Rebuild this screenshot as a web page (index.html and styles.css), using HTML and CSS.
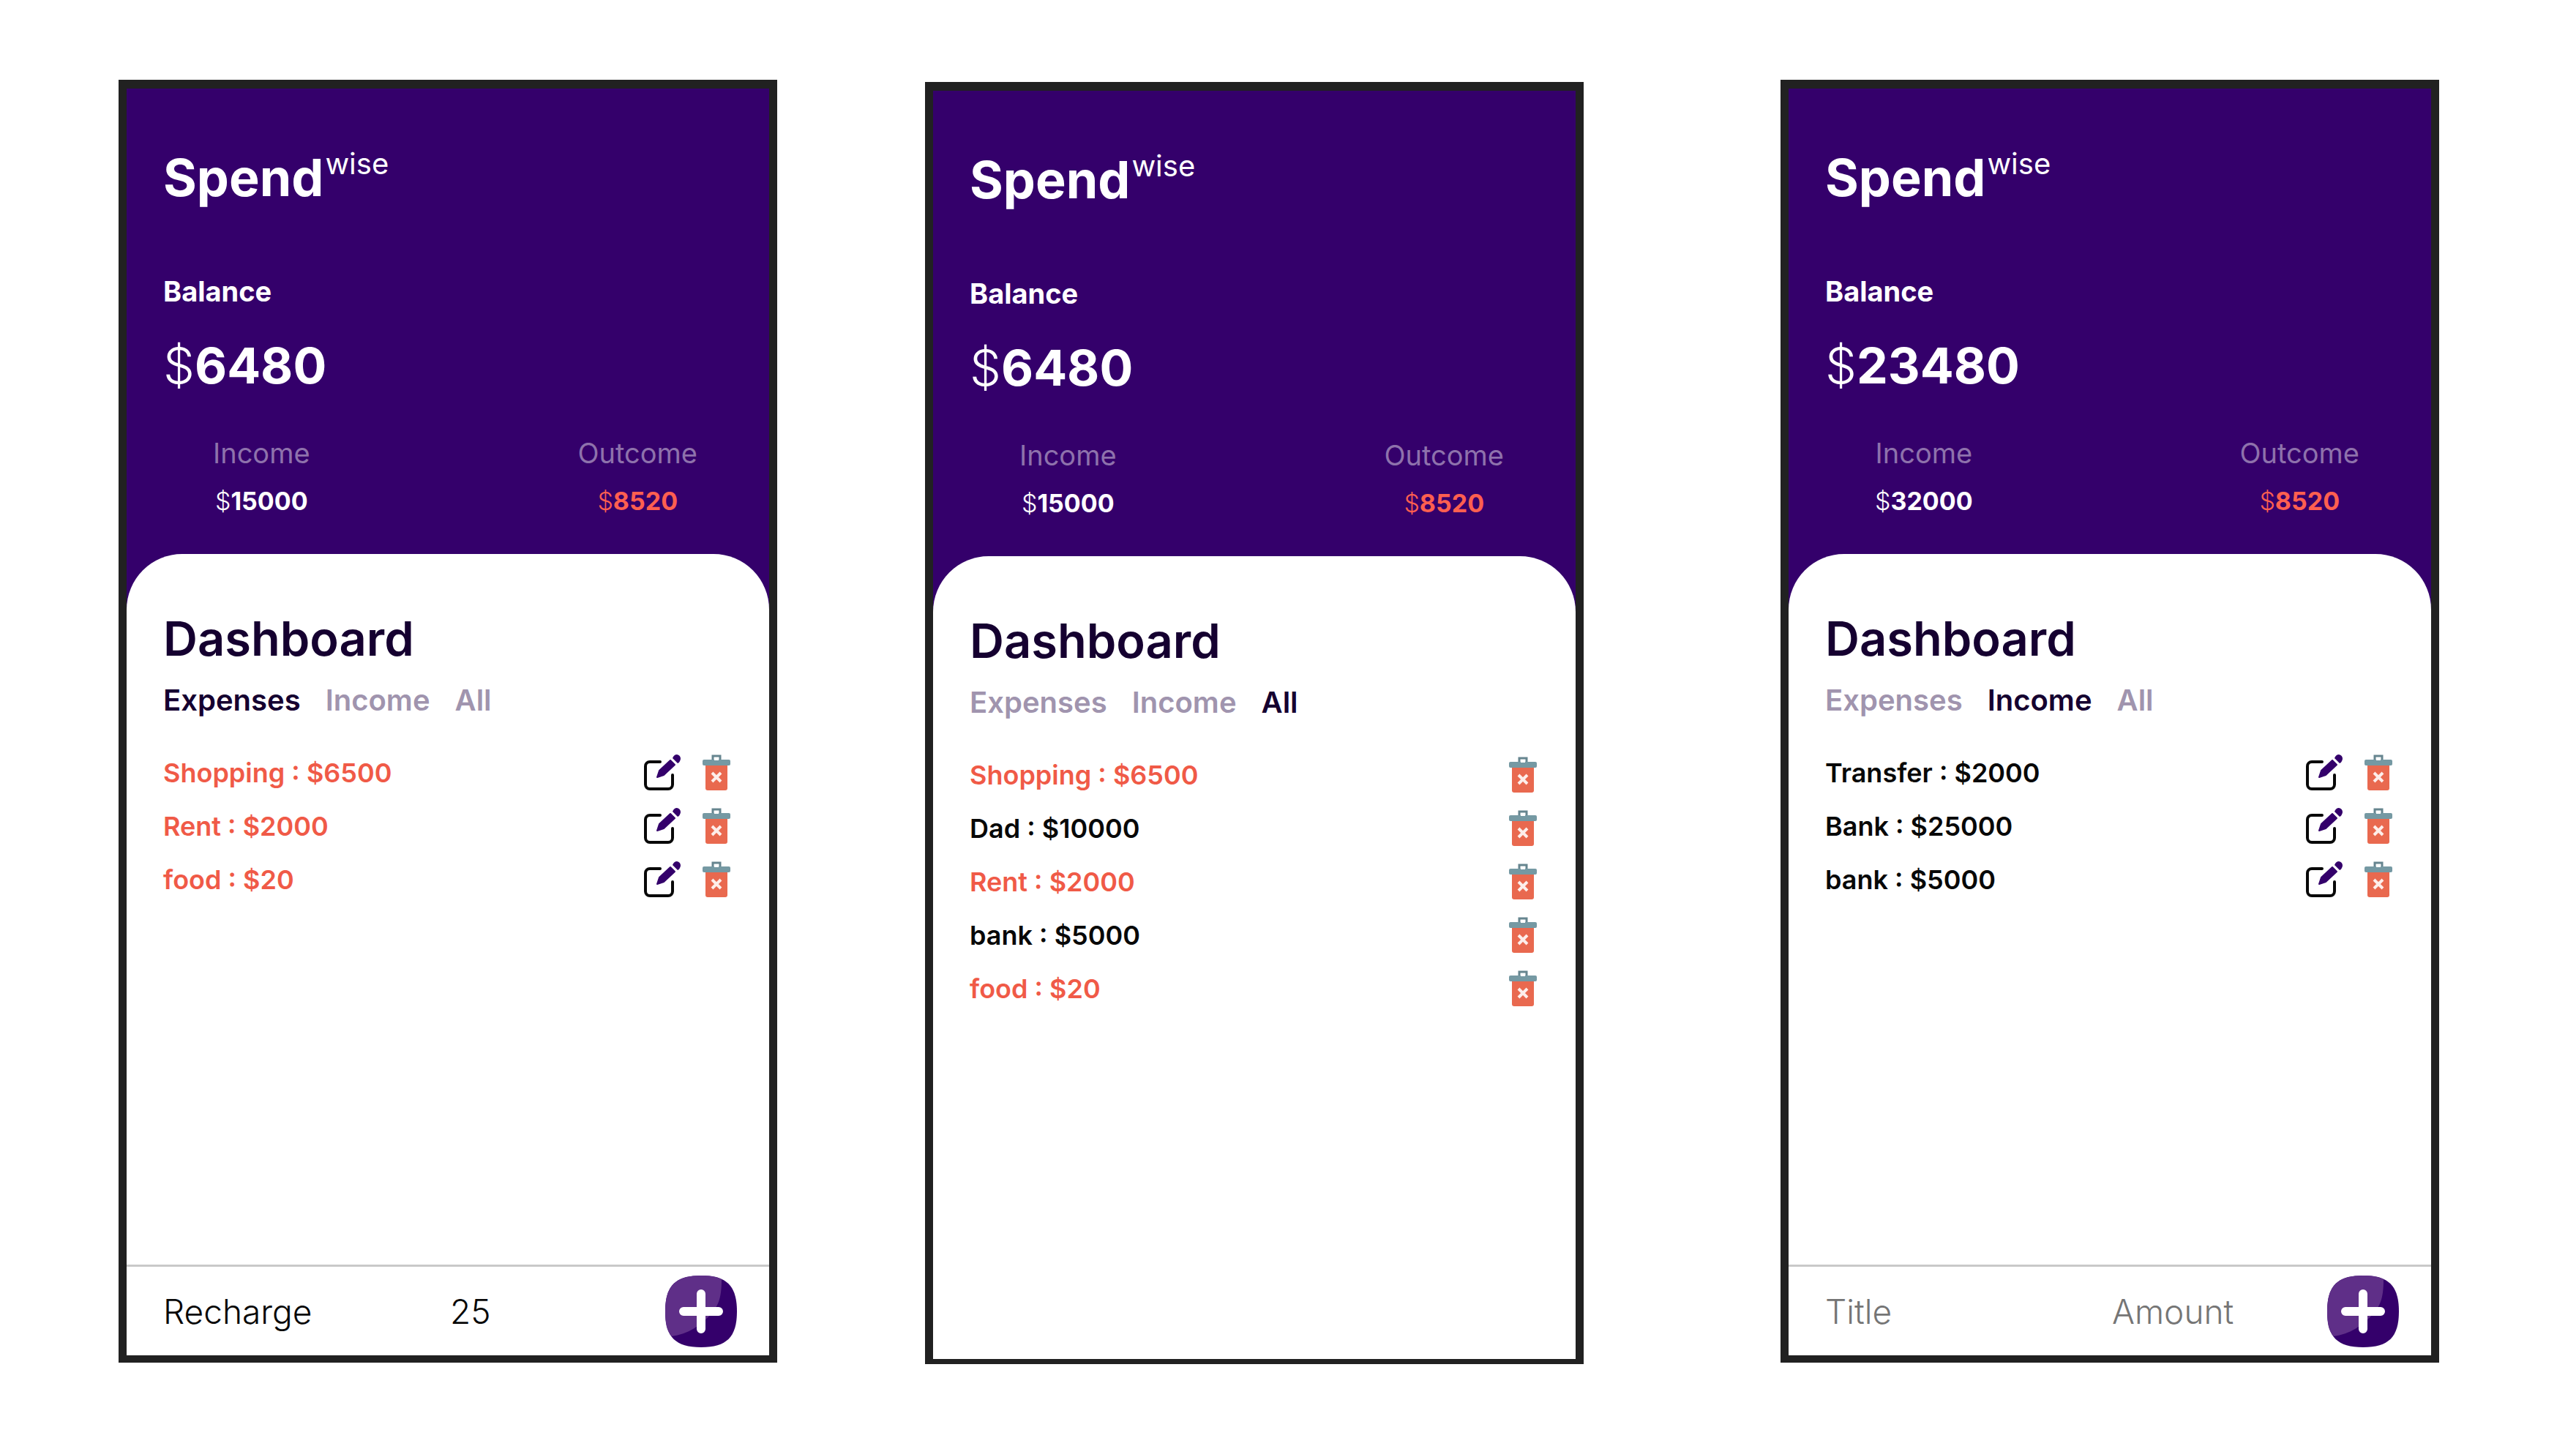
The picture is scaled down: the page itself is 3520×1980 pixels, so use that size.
FILE: index.html
```html
<!DOCTYPE html>
<html lang="en">
<head>
<meta charset="utf-8">
<meta name="viewport" content="width=device-width, initial-scale=1">
<title>Spendwise</title>
<link rel="stylesheet" href="styles.css">
</head>
<body>
<svg class="sprite" aria-hidden="true">
  <symbol id="edit" viewBox="0 0 50 50">
    <path d="M22 10H8a6 6 0 0 0-6 6v25a6 6 0 0 0 6 6h25a6 6 0 0 0 6-6V28" fill="none" stroke="#080808" stroke-width="4" stroke-linecap="round"/>
    <path d="M18 31l3-9L36 8l6 6-15 14z" fill="#34006b" stroke="#34006b" stroke-width="2" stroke-linejoin="round"/>
    <path d="M39 5q2-5 6-5 5 1 5 6-1 5-4 6z" fill="#34006b"/>
  </symbol>
  <symbol id="trash" viewBox="0 0 38 50">
    <path d="M4 13h30v33a3 3 0 0 1-3 3H7a3 3 0 0 1-3-3z" fill="#e9694f"/>
    <path d="M14 9V2h10v7" fill="none" stroke="#66858f" stroke-width="3"/>
    <rect x="0" y="7" width="38" height="8" rx="2" fill="#7599a3"/>
    <rect x="16" y="4" width="6" height="4" fill="#fff"/>
    <path d="M13 25l12 12M25 25L13 37" stroke="#fdeeea" stroke-width="4"/>
  </symbol>
  <symbol id="plus" viewBox="0 0 98 98">
    <path d="M49 0C84 0 98 14 98 49S84 98 49 98 0 84 0 49 14 0 49 0z" fill="#34006b"/>
    <path d="M49 0C61 0 70 1 77 5 77 24 75 37 66 48 50 69 30 80 9 83 2 76 0 65 0 49 0 14 14 0 49 0z" fill="#5f2f88"/>
    <path d="M25 49h48M49 25v48" stroke="#fff" stroke-width="12" stroke-linecap="round"/>
  </symbol>
</svg>

<main class="board">
  <section class="phone">
    <header class="summary">
      <h1 class="logo">Spend<sup>wise</sup></h1>
      <p class="label">Balance</p>
      <p class="balance"><span>$</span>6480</p>
      <dl class="totals">
        <div><dt>Income</dt><dd><span>$</span>15000</dd></div>
        <div><dt>Outcome</dt><dd class="out"><span>$</span>8520</dd></div>
      </dl>
    </header>
    <div class="card">
      <h2>Dashboard</h2>
      <nav class="tabs">
        <button type="button" class="active">Expenses</button>
        <button type="button">Income</button>
        <button type="button">All</button>
      </nav>
      <ul class="entries">
        <li class="expense"><span>Shopping : $6500</span><button type="button" aria-label="Edit Shopping"><svg class="edit"><use href="#edit"/></svg></button><button type="button" aria-label="Delete Shopping"><svg class="trash"><use href="#trash"/></svg></button></li>
        <li class="expense"><span>Rent : $2000</span><button type="button" aria-label="Edit Rent"><svg class="edit"><use href="#edit"/></svg></button><button type="button" aria-label="Delete Rent"><svg class="trash"><use href="#trash"/></svg></button></li>
        <li class="expense"><span>food : $20</span><button type="button" aria-label="Edit food"><svg class="edit"><use href="#edit"/></svg></button><button type="button" aria-label="Delete food"><svg class="trash"><use href="#trash"/></svg></button></li>
      </ul>
    </div>
    <form class="add">
      <input type="text" aria-label="Title" placeholder="Title" value="Recharge">
      <input type="text" inputmode="numeric" aria-label="Amount" placeholder="Amount" value="25">
      <button type="button" aria-label="Add expense"><svg class="plus"><use href="#plus"/></svg></button>
    </form>
  </section>

  <section class="phone phone-all">
    <header class="summary">
      <h1 class="logo">Spend<sup>wise</sup></h1>
      <p class="label">Balance</p>
      <p class="balance"><span>$</span>6480</p>
      <dl class="totals">
        <div><dt>Income</dt><dd><span>$</span>15000</dd></div>
        <div><dt>Outcome</dt><dd class="out"><span>$</span>8520</dd></div>
      </dl>
    </header>
    <div class="card">
      <h2>Dashboard</h2>
      <nav class="tabs">
        <button type="button">Expenses</button>
        <button type="button">Income</button>
        <button type="button" class="active">All</button>
      </nav>
      <ul class="entries">
        <li class="expense"><span>Shopping : $6500</span><button type="button" aria-label="Delete Shopping"><svg class="trash"><use href="#trash"/></svg></button></li>
        <li><span>Dad : $10000</span><button type="button" aria-label="Delete Dad"><svg class="trash"><use href="#trash"/></svg></button></li>
        <li class="expense"><span>Rent : $2000</span><button type="button" aria-label="Delete Rent"><svg class="trash"><use href="#trash"/></svg></button></li>
        <li><span>bank : $5000</span><button type="button" aria-label="Delete bank"><svg class="trash"><use href="#trash"/></svg></button></li>
        <li class="expense"><span>food : $20</span><button type="button" aria-label="Delete food"><svg class="trash"><use href="#trash"/></svg></button></li>
      </ul>
    </div>
  </section>

  <section class="phone">
    <header class="summary">
      <h1 class="logo">Spend<sup>wise</sup></h1>
      <p class="label">Balance</p>
      <p class="balance"><span>$</span>23480</p>
      <dl class="totals">
        <div><dt>Income</dt><dd><span>$</span>32000</dd></div>
        <div><dt>Outcome</dt><dd class="out"><span>$</span>8520</dd></div>
      </dl>
    </header>
    <div class="card">
      <h2>Dashboard</h2>
      <nav class="tabs">
        <button type="button">Expenses</button>
        <button type="button" class="active">Income</button>
        <button type="button">All</button>
      </nav>
      <ul class="entries">
        <li><span>Transfer : $2000</span><button type="button" aria-label="Edit Transfer"><svg class="edit"><use href="#edit"/></svg></button><button type="button" aria-label="Delete Transfer"><svg class="trash"><use href="#trash"/></svg></button></li>
        <li><span>Bank : $25000</span><button type="button" aria-label="Edit Bank"><svg class="edit"><use href="#edit"/></svg></button><button type="button" aria-label="Delete Bank"><svg class="trash"><use href="#trash"/></svg></button></li>
        <li><span>bank : $5000</span><button type="button" aria-label="Edit bank"><svg class="edit"><use href="#edit"/></svg></button><button type="button" aria-label="Delete bank"><svg class="trash"><use href="#trash"/></svg></button></li>
      </ul>
    </div>
    <form class="add">
      <input type="text" aria-label="Title" placeholder="Title">
      <input type="text" inputmode="numeric" aria-label="Amount" placeholder="Amount">
      <button type="button" aria-label="Add income"><svg class="plus"><use href="#plus"/></svg></button>
    </form>
  </section>
</main>
</body>
</html>
```

FILE: styles.css
```css
:root {
  --purple: #34006b;
  --ink: #150030;
  --red: #f05a47;
}

* {
  box-sizing: border-box;
  margin: 0;
  padding: 0;
}

body {
  background: #fff;
  color: #080808;
  font-family: Inter, "Open Sans", sans-serif;
}

button,
input {
  background: none;
  border: 0;
  color: inherit;
  font: inherit;
}

button {
  cursor: pointer;
}

svg {
  display: block;
}

.sprite {
  display: none;
}

/* Three phone screens; the empty tracks are the spaces between them. */
.board {
  display: grid;
  grid-template-columns: 900fr 202fr 900fr 269fr 900fr;
  min-height: 100vh;
  padding: 109px 187px 118px 162px;
}

.phone {
  background: var(--purple);
  border: solid #212121;
  border-width: 12px 11px 10px;
  display: flex;
  flex-direction: column;
  grid-column: 1;
}

.phone-all {
  border-bottom-width: 7px;
  grid-column: 3;
  margin: 3px 0 -2px;
}

.phone:last-child {
  grid-column: 5;
}

.summary {
  color: #fff;
  padding: 82px 50px 48px;
}

.logo {
  font-size: 70px;
  font-weight: 700;
  line-height: 80px;
}

.logo sup {
  font-size: 40px;
  font-weight: 400;
  line-height: 0;
  margin-left: 2px;
  vertical-align: 30px;
}

.label {
  font-size: 38px;
  font-weight: 700;
  line-height: 48px;
  margin-top: 91px;
}

.balance {
  font-size: 68px;
  font-weight: 700;
  line-height: 88px;
  margin-top: 33px;
}

.balance span,
.totals dd span {
  font-weight: 300;
}

.totals {
  display: flex;
  font-size: 38px;
  justify-content: space-between;
  line-height: 48px;
  margin-top: 52px;
  padding: 0 48px 0 68px;
  text-align: center;
}

.totals dt {
  color: #8e72ac;
  font-weight: 400;
}

.totals dd {
  font-size: 34px;
  font-weight: 700;
  margin-top: 18px;
}

.totals .out {
  color: #ff5f50;
}

.card {
  background: #fff;
  border-radius: 76px 76px 0 0;
  flex: 1;
  padding: 78px 50px 48px;
}

h2 {
  color: var(--ink);
  font-size: 65px;
  font-weight: 600;
  line-height: 76px;
}

.tabs {
  color: #a094ae;
  display: flex;
  font-size: 40px;
  font-weight: 600;
  gap: 34px;
  line-height: 48px;
  margin-top: 22px;
}

.tabs .active {
  color: var(--ink);
}

.entries {
  font-size: 36px;
  font-weight: 600;
  list-style: none;
  margin-top: 38px;
}

.entries li {
  align-items: center;
  display: flex;
  gap: 30px;
  height: 73px;
  padding-right: 3px;
}

.entries span {
  flex: 1;
}

.expense {
  color: var(--red);
}

.edit {
  height: 50px;
  width: 50px;
}

.trash {
  height: 50px;
  width: 38px;
}

.add {
  align-items: center;
  background: #fff;
  border-top: 3px solid #c9c9c9;
  display: grid;
  font-size: 46px;
  font-weight: 300;
  grid-template-columns: 4fr 3fr 98px;
  height: 124px;
  padding: 1px 44px 0 50px;
}

.add input {
  min-width: 0;
  outline: 0;
  width: 100%;
}

.add input::placeholder {
  color: #757575;
  opacity: 1;
}

.plus {
  height: 98px;
  width: 98px;
}
```
